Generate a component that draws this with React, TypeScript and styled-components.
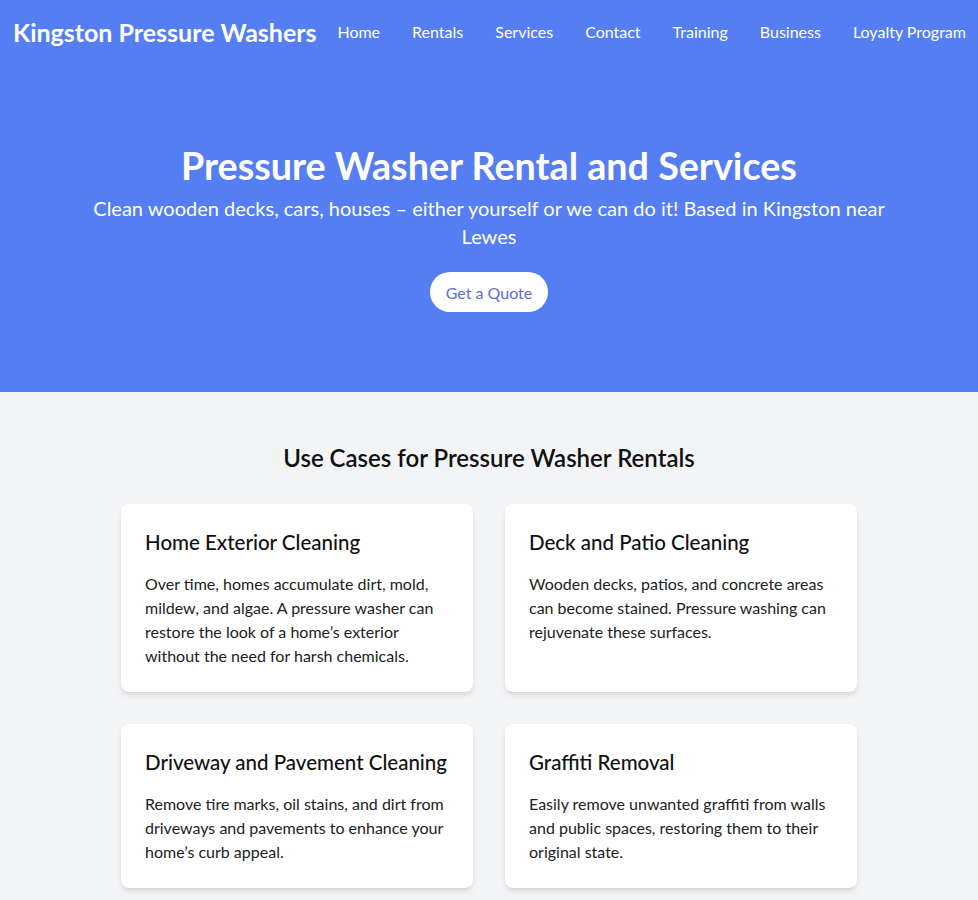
import React from "react";
import styled, { createGlobalStyle } from "styled-components";

const Global = createGlobalStyle`
  html, body { margin: 0; padding: 0; }
  body {
    font-family: Lato, "Open Sans", "Noto Sans", sans-serif;
    background: #f3f4f6;
    color: #111;
  }
  * { box-sizing: border-box; }
`;

const BLUE = "#557ef3";

const Header = styled.header`
  background: ${BLUE};
  display: flex;
  align-items: center;
  justify-content: space-between;
  height: 64px;
  padding: 0 12px 0 13px;
`;

const Logo = styled.div`
  color: #fff;
  font-weight: 700;
  font-size: 25px;
  line-height: 32px;
`;

const Nav = styled.nav`
  display: flex;
  gap: 32px;
`;

const NavLink = styled.a`
  color: #fff;
  text-decoration: none;
  font-size: 16px;
  line-height: 24px;
`;

const Hero = styled.section`
  background: ${BLUE};
  color: #fff;
  padding: 82px 16px 80px;
  display: flex;
  flex-direction: column;
  align-items: center;
  text-align: center;
`;

const HeroTitle = styled.h1`
  margin: 0;
  font-size: 37.7px;
  line-height: 40px;
  font-weight: 700;
`;

const HeroText = styled.p`
  margin: 8px 0 22px;
  max-width: 800px;
  font-size: 20px;
  line-height: 28px;
`;

const QuoteButton = styled.button`
  background: #fff;
  color: #5f6ed3;
  border: none;
  border-radius: 999px;
  height: 40px;
  padding: 0 16px;
  font-family: inherit;
  font-size: 16px;
  cursor: pointer;
`;

const Section = styled.section`
  padding: 48px 16px;
  display: flex;
  flex-direction: column;
  align-items: center;
`;

const SectionTitle = styled.h2`
  margin: 2px 0 30px;
  font-size: 24px;
  line-height: 32px;
  font-weight: 600;
  color: #111;
`;

const Grid = styled.div`
  width: 736px;
  display: grid;
  grid-template-columns: 1fr 1fr;
  gap: 32px;
`;

const Card = styled.div`
  background: #fff;
  border-radius: 8px;
  padding: 24px;
  box-shadow: 0 4px 6px -1px rgba(0, 0, 0, 0.1), 0 2px 4px -2px rgba(0, 0, 0, 0.1);
`;

const CardTitle = styled.h3`
  margin: 0 0 16px;
  font-size: 20.5px;
  line-height: 28px;
  font-weight: 500;
  color: #111;
`;

const CardText = styled.p`
  margin: 0;
  font-size: 16px;
  line-height: 24px;
  color: #222;
`;

const links = ["Home", "Rentals", "Services", "Contact", "Training", "Business", "Loyalty Program"];

const cases = [
  {
    title: "Home Exterior Cleaning",
    text: "Over time, homes accumulate dirt, mold, mildew, and algae. A pressure washer can restore the look of a home\u2019s exterior without the need for harsh chemicals.",
  },
  {
    title: "Deck and Patio Cleaning",
    text: "Wooden decks, patios, and concrete areas can become stained. Pressure washing can rejuvenate these surfaces.",
  },
  {
    title: "Driveway and Pavement Cleaning",
    text: "Remove tire marks, oil stains, and dirt from driveways and pavements to enhance your home\u2019s curb appeal.",
  },
  {
    title: "Graffiti Removal",
    text: "Easily remove unwanted graffiti from walls and public spaces, restoring them to their original state.",
  },
];

export default function App() {
  return (
    <>
      <Global />
      <Header>
        <Logo>Kingston Pressure Washers</Logo>
        <Nav>
          {links.map((l) => (
            <NavLink key={l} href="#">{l}</NavLink>
          ))}
        </Nav>
      </Header>
      <Hero>
        <HeroTitle>Pressure Washer Rental and Services</HeroTitle>
        <HeroText>
          Clean wooden decks, cars, houses – either yourself or we can do it! Based in Kingston near Lewes
        </HeroText>
        <QuoteButton>Get a Quote</QuoteButton>
      </Hero>
      <Section>
        <SectionTitle>Use Cases for Pressure Washer Rentals</SectionTitle>
        <Grid>
          {cases.map((c) => (
            <Card key={c.title}>
              <CardTitle>{c.title}</CardTitle>
              <CardText>{c.text}</CardText>
            </Card>
          ))}
        </Grid>
      </Section>
    </>
  );
}
